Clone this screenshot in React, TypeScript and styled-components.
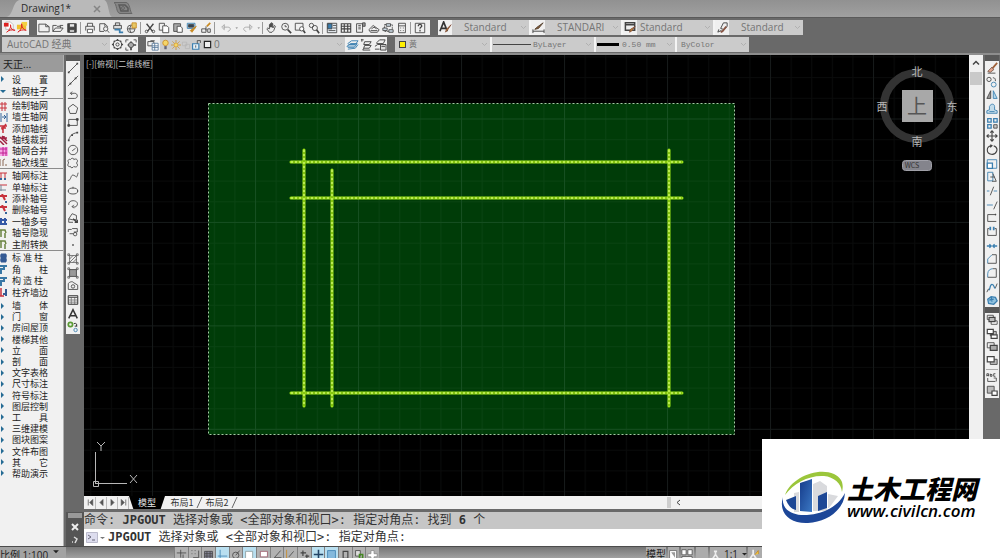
import React from 'react';
import styled, { createGlobalStyle } from 'styled-components';

const cjk = "'Noto Sans CJK SC', sans-serif";

const Global = createGlobalStyle`
  * { box-sizing: border-box; }
  body { margin: 0; background: #6a6a6a; font-family: 'Open Sans', ${cjk}; font-size: 10px; color: #333; }
  button { margin: 0; padding: 0; border: 0; background: none; font: inherit; color: inherit; }
  svg { display: block; flex: none; }
`;

const Page = styled.div`
  display: flex;
  flex-direction: column;
  height: 100vh;
  overflow: hidden;
  position: relative;
  background: #6a6a6a;
`;

/* ---------- document tabs ---------- */
const FileTabs = styled.header`
  display: flex;
  align-items: flex-end;
  height: 18px;
  padding-left: 6px;
  background: linear-gradient(#919191, #a0a0a0);
  border-bottom: 1px solid #5a5a5a;
`;
const FileTab = styled.div`
  display: flex;
  align-items: center;
  justify-content: space-between;
  position: relative;
  width: 106px;
  height: 17px;
  padding: 0 9px 0 15px;
  color: #2c2c2c;
  line-height: 17px;
`;
const TabShape = styled.svg`
  position: absolute;
  inset: 0;
  z-index: 0;
`;
const TabTitle = styled.span`
  position: relative;
`;
const TabClose = styled.button`
  position: relative;
  display: grid;
  place-items: center;
  width: 12px;
  height: 12px;
`;
const NewTab = styled.button`
  height: 17px;
`;

/* ---------- toolbars ---------- */
const Toolbars = styled.div`
  display: flex;
  flex-direction: column;
  gap: 2px;
  padding: 2px 2px 1px;
  background: #696969;
  border-bottom: 2px solid #8d8d8d;
`;
const ToolbarRow = styled.div`
  display: flex;
  gap: 8px;
  height: 15px;
`;
const Bar = styled.div<{ $w: number; $light?: boolean }>`
  display: flex;
  align-items: center;
  width: ${p => p.$w}px;
  height: 15px;
  background: ${p => (p.$light ? '#f0f0f0' : '#cbcbcb')};
`;
const IconButton = styled.button<{ $w?: number }>`
  display: grid;
  place-items: center;
  flex: none;
  width: ${p => p.$w || 14}px;
  height: 15px;
  background: #f0f0f0;
`;
const Rule = styled.span`
  flex: none;
  width: 2px;
  height: 12px;
  margin: 0 1px;
  border-left: 1px solid #999;
`;
const Combo = styled.label<{ $w: number; $divider?: boolean }>`
  display: flex;
  align-items: center;
  position: relative;
  flex: none;
  width: ${p => p.$w}px;
  height: 15px;
  padding-right: 2px;
  border-left: ${p => (p.$divider ? '2px solid #f4f4f4' : '0')};
  background: #cbcbcb;
`;
const Select = styled.select<{ $mono?: boolean; $pad?: number }>`
  flex: 1;
  min-width: 0;
  height: 15px;
  margin: 0;
  padding: 0 0 0 ${p => p.$pad || 0}px;
  border: 0;
  appearance: none;
  background: transparent;
  color: #757575;
  font-family: ${p => (p.$mono ? "'Liberation Mono', " : "'Open Sans', ")} ${cjk};
  font-size: ${p => (p.$mono ? 8 : 10)}px;
  line-height: 15px;
  text-overflow: clip;
`;
const Swatch = styled.span`
  width: 7px;
  height: 7px;
  margin: 0 0 0 4px;
  background: #ffef00;
  border: 1px solid #444;
`;
const LineSample = styled.span<{ $w: number; $h: number }>`
  flex: none;
  width: ${p => p.$w}px;
  height: ${p => p.$h}px;
  margin-left: 1px;
  background: ${p => (p.$h > 1 ? '#000' : '#444')};
`;

/* ---------- workspace ---------- */
const Workspace = styled.div`
  display: flex;
  flex: 1;
  min-height: 0;
`;
const SidePanel = styled.nav`
  display: flex;
  flex-direction: column;
  flex: none;
  width: 64px;
  background: #f1f1f1;
  border-right: 1px solid #b0b0b0;
  overflow: hidden;
  font-family: ${cjk};
`;
const PanelTitle = styled.h1`
  margin: 0;
  height: 17px;
  padding-left: 3px;
  background: #9b9b9b;
  font-size: 10px;
  font-weight: 400;
  line-height: 17px;
  color: #222;
`;
const MenuGroup = styled.div<{ $h: number; $line?: boolean }>`
  display: flex;
  flex: none;
  flex-direction: column;
  height: ${p => p.$h}px;
  padding-top: 1px;
  border-bottom: 1px solid ${p => (p.$line ? '#8c8c8c' : 'transparent')};
`;
const MenuItem = styled.button`
  display: flex;
  flex: 1;
  align-items: center;
  gap: 4px;
  min-height: 0;
  color: #222;
  font-size: 9px;
  line-height: 11px;
  text-align: left;
  white-space: pre;
`;
const MainColumn = styled.main`
  display: flex;
  flex: 1;
  flex-direction: column;
  min-width: 0;
`;
const DrawingRow = styled.div`
  display: flex;
  flex: 1;
  min-height: 0;
`;
const Dock = styled.aside<{ $w: number }>`
  display: flex;
  flex-direction: column;
  flex: none;
  width: ${p => p.$w}px;
  padding: 0 0 0 2px;
  background: #696969;
`;
const Grip = styled.div`
  width: 14px;
  height: 6px;
  background: #585858;
`;
const ToolColumn = styled.div<{ $h: number }>`
  display: flex;
  flex: none;
  flex-direction: column;
  width: 14px;
  height: ${p => p.$h}px;
  background: #f0f0f0;
`;
const ToolButton = styled.button`
  display: grid;
  place-items: center;
  flex: 1;
  min-height: 0;
  width: 14px;
`;
const ColumnRule = styled.hr`
  width: 12px;
  margin: 1px;
  border: 0;
  border-top: 1px solid #aaa;
`;
const CanvasColumn = styled.div`
  display: flex;
  flex: 1;
  flex-direction: column;
  min-width: 0;
`;
const Viewport = styled.section`
  position: relative;
  flex: 1;
  min-height: 0;
  overflow: hidden;
  background: #000;
`;
const ViewLabel = styled.p`
  position: absolute;
  top: 3px;
  left: 2px;
  margin: 0;
  color: #c8c8c8;
  font-family: ${cjk};
  font-size: 8px;
  line-height: 11px;
`;
const Compass = styled.svg`
  position: absolute;
  top: 6px;
  right: 11px;
`;
const Ucs = styled.svg`
  position: absolute;
  bottom: 4px;
  left: 4px;
`;
const VScroll = styled.div`
  display: flex;
  flex-direction: column;
  align-items: center;
  gap: 4px;
  flex: none;
  width: 14px;
  padding-top: 3px;
  background: #f0f0f0;
`;
const Thumb = styled.div`
  width: 12px;
  height: 13px;
  background: #c9c9c9;
`;
const LayoutTabs = styled.div`
  display: flex;
  flex: none;
  align-items: center;
  height: 13px;
  padding-left: 1px;
  background: #f1f1f1;
  font-family: ${cjk};
  font-size: 9px;
  line-height: 13px;
`;
const NavButton = styled.button`
  display: grid;
  place-items: center;
  width: 11px;
  height: 12px;
  border-right: 1px solid #bbb;
`;
const LayoutTab = styled.button<{ $active?: boolean }>`
  width: ${p => (p.$active ? 36 : 34)}px;
  height: 13px;
  color: ${p => (p.$active ? '#e8e8e8' : '#333')};
  background: ${p => (p.$active ? '#000' : 'none')};
  clip-path: ${p => (p.$active ? 'polygon(0 0, 100% 0, 88% 100%, 12% 100%)' : 'none')};
`;
const HScroll = styled.div`
  display: flex;
  align-items: center;
  gap: 5px;
  flex: none;
  width: 302px;
  height: 13px;
  margin-left: auto;
`;
const HGrip = styled.span`
  width: 4px;
  height: 11px;
  background: #cdcdcd;
`;

/* ---------- command line ---------- */
const Command = styled.section`
  display: flex;
  flex: none;
  padding: 3px 0 0 2px;
  background: #696969;
`;
const CommandGrip = styled.div`
  display: flex;
  flex-direction: column;
  align-items: center;
  gap: 5px;
  width: 18px;
  height: 34px;
  background: #555;
`;
const GripDots = styled.div`
  width: 14px;
  height: 5px;
  margin-top: 1px;
  background: radial-gradient(circle, #999 1px, transparent 1px) 0 0 / 2px 2px;
`;
const Console = styled.div`
  flex: 1;
  min-width: 0;
  color: #333;
  font-family: 'DejaVu Sans Mono', ${cjk};
  font-size: 12px;
  line-height: 17px;
  white-space: pre;
`;
const History = styled.p`
  height: 17px;
  margin: 0;
  background: #c6c6c6;
`;
const Prompt = styled.label`
  display: flex;
  align-items: center;
  height: 17px;
  padding-left: 2px;
  background: #fff;
`;
const PromptText = styled.span`
  padding-left: 3px;
`;
const PromptInput = styled.input`
  flex: 1;
  min-width: 0;
  height: 17px;
  padding: 0;
  border: 0;
  background: transparent;
  font: inherit;
  outline: 0;
`;

/* ---------- status bar ---------- */
const StatusBar = styled.footer`
  display: flex;
  flex: none;
  height: 12px;
  border-top: 1px solid #4c4c4c;
  overflow: hidden;
  background: linear-gradient(#767676, #a0a0a0);
  font-family: 'Open Sans', ${cjk};
`;
const Scale = styled.button`
  display: flex;
  align-items: flex-start;
  gap: 4px;
  width: 66px;
  height: 16px;
  padding-top: 1px;
  background: #a3a3a3;
  color: #1e1e1e;
  line-height: 14px;
`;
const StatusIcons = styled.div`
  display: flex;
  width: 205px;
  margin-left: 108px;
`;
const StatusButton = styled.button<{ $on?: boolean }>`
  display: grid;
  place-items: center;
  flex: 1;
  height: 14px;
  background: ${p => (p.$on ? '#b9dff0' : '#b2b2b2')};
  border-left: 1px solid #808080;
`;
const StatusRight = styled.div`
  display: flex;
  gap: 2px;
  width: 354px;
  margin-left: auto;
  line-height: 14px;
  color: #1e1e1e;
`;
const StatusText = styled.button<{ $w: number }>`
  display: flex;
  align-items: center;
  gap: 3px;
  width: ${p => p.$w}px;
  height: 14px;
  background: #acacac;
`;

/* ---------- site badge ---------- */
const Badge = styled.a`
  position: absolute;
  right: 0;
  bottom: 0;
  display: flex;
  align-items: center;
  gap: 0;
  width: 238px;
  height: 119px;
  padding: 0 0 2px 19px;
  background: #fff;
  color: #000;
  text-decoration: none;
`;
const BadgeText = styled.span`
  display: flex;
  flex-direction: column;
  font-style: italic;
  white-space: nowrap;
`;
const BadgeName = styled.strong`
  font-family: ${cjk};
  font-size: 26px;
  font-weight: 900;
  line-height: 26px;
`;
const BadgeUrl = styled.span`
  font-family: 'Open Sans', sans-serif;
  font-size: 17px;
  font-weight: 600;
  line-height: 20px;
`;

/* ---------- icons, all on a 14 unit square ---------- */
const D = '#444';
const B = '#3b7fb0';
const O = '#c98a22';
const glyphs: Record<string, React.ReactNode> = {
  pdf: <><path d="M3 1h5l3 3v5H3z" fill="#fff" stroke="#bbb" /><path d="M1 2h5v4H1z" fill="#d22" stroke="none" /><path d="M4 12c3-2 5-6 4-8 0 4 2 6 5 6-4-1-7 0-9 2z" stroke="#d22" /></>,
  pdfy: <><path d="M1 4h10v5H1z" fill="#f0c030" stroke="none" /><path d="M6 1h6v4H6z" fill="#f3d040" stroke="none" /><path d="M2 12c3-2 5-6 4-9 0 4 2 6 5 7-4-1-7 0-9 2z" stroke="#d22" /></>,
  fresh: <path d="M1 2.5h8l4 3v6H1zM9 2.5v3h4" />,
  open: <path d="M1 11V4h4l1 1h4v2M1 11l3-4h9l-3 4zM9 4h4" />,
  save: <><path d="M2 2h10v10H2z" fill={D} /><path d="M4 2h6v4H4z" fill="#e8e8e8" /><path d="M4 9h6v3H4z" fill="#ddd" /></>,
  print: <><path d="M4 5V1.5h6V5M2 10V5h10v5" /><path d="M4 8.5h6v4H4z" fill="#fff" /></>,
  preview: <><path d="M7 11H2V2h6l3 3v1M8 2v3" /><circle cx="9" cy="8" r="2.5" /><path d="M11 10l2 2.500" /></>,
  publish: <><path d="M2 8V4h9v4zM4 4V1h5v3" fill="#ddd" /><path d="M3 9h6v3h4" stroke={B} strokeWidth="2" /></>,
  globe: <><circle cx="6" cy="8" r="4.500" /><path d="M2 8h8M6 4c-2 3-2 6 0 8" /><path d="M7 1h5v6H7z" fill="#e6c867" stroke={O} /></>,
  cut: <><path d="M3 2l7 9M11 2L4 11" strokeWidth="1.600" /><circle cx="3" cy="11" r="1.500" /><circle cx="11" cy="11" r="1.500" /></>,
  copy: <><path d="M1.500 1.500h6v8h-6z" /><path d="M5.500 4.500h5l2 2v6h-7z" fill="#fff" /></>,
  paste: <><path d="M2 2h8v9H2z" fill="#aaa" /><path d="M6 5h4l2 2v5H6z" fill="#fff" /></>,
  match: <><path d="M1.500 1.500h9v6h-9z" fill="#cfe2f0" stroke={B} /><path d="M3 3h6v3H3z" fill="#345" /><path d="M12 5l-5 7-2-2z" fill={O} stroke={O} /></>,
  blockedit: <><path d="M2 8h5v4H2zM9 8h3v4H9zM7 5v5" /><path d="M8 5l4-4" stroke={O} strokeWidth="2" /></>,
  undo: <path d="M2 6l3-3v6zM4 6h5c4 0 4 4 0 5" stroke="#a4a4a4" fill="none" />,
  redo: <path d="M12 6L9 3v6zM10 6H5c-4 0-4 4 0 5" stroke="#a4a4a4" fill="none" />,
  dot: <path d="M1 6h6L4 9z" fill="#777" stroke="none" />,
  pan: <path d="M4 12L1 8l1-1 2 1V3h1v3-4h1v4-5h1v5-4h1v5l2-3 1 1-2 5-2 2z" fill="#eee" />,
  zoomrt: <><circle cx="6" cy="5.500" r="4" /><path d="M9 9l4 4" strokeWidth="2" /><path d="M6 3.500v2h2" /></>,
  zoomwin: <><path d="M1.500 1.500h9v8h-9z" /><circle cx="9" cy="8" r="2.500" fill="#fff" /><path d="M11 10l2 3" strokeWidth="2" /></>,
  zoomprev: <><circle cx="4" cy="4" r="2.500" /><circle cx="8" cy="7" r="3" /><path d="M10 9l3 4" strokeWidth="2" /></>,
  props: <><path d="M1.500 1.500h11v11h-11z" fill="#e8eef3" /><path d="M2 2h5v6H2z" fill={B} /><path d="M8 4h4M8 7h4M3 10h8" /></>,
  center: <path d="M1.500 2h11v10h-11zM5 2v10M9 2v10M1.500 5h11M1.500 8h11" strokeWidth="1.300" />,
  palettes: <><path d="M3 2h7v10H3zM5 4h3M5 6h3M5 8h3" /><path d="M10 1h3v4h-3z" fill="#999" /></>,
  sheets: <path d="M1 9l5-5 7 5-2 3H3zM4 8l3-2 3 2M3 10h8" />,
  markup: <><path d="M3 3h9v8H3z" strokeDasharray="2 1" /><path d="M5 2h5v3H5zM1 7h5v3H1zM8 9h5v3H8z" fill="#ccdbe5" /></>,
  calc: <><path d="M3 1.500h8v11H3zM3 4.500h8M5 7h1M8 7h1M5 10h1M8 10h1" /></>,
  help: <><path d="M1.500 1.500h11v11h-11z" /><path d="M5 5c0-3 4-3 4 0 0 1-2 1-2 3M7 9v2" strokeWidth="1.500" /></>,
  textstyle: <><path d="M1 11L5 1l4 10M3 8h5" strokeWidth="1.800" stroke="#333" /><path d="M13 4l-4 6-2 2 1-3z" fill={O} stroke="#854" /></>,
  dimstyle: <><path d="M1 11h12M1 9v4M13 9v4" /><path d="M12 2L7 8 3 9l2-2z" fill="#8a5a35" stroke="#543" /></>,
  tablestyle: <><path d="M1.500 2h10v8h-10zM1.500 4h10" strokeWidth="1.600" /><path d="M12 6l-4 5-2 1 1-3z" fill={O} stroke="#854" /></>,
  leaderstyle: <><path d="M3 9L2 12l4-2M5 8L8 2h4v4L8 9z" /><path d="M11 6l-4 5-2 1" stroke="#854" strokeWidth="2" /></>,
  gear: <><circle cx="7" cy="7" r="4.500" /><circle cx="7" cy="7" r="1.700" /><path d="M7 1v2M7 11v2M1 7h2M11 7h2M3 3l1 1M10 10l1 1M11 3l-1 1M4 10l-1 1" strokeWidth="1.600" /></>,
  gear2: <><path d="M1 1h3M1 1v3M13 1h-3M13 1v3M1 13h3M1 13v-3" /><circle cx="7" cy="7" r="3" fill="#aaa" /><path d="M7 3v1M7 10v3M3 7h1M10 7h3" strokeWidth="2" /></>,
  layers: <><path d="M1 8V3h7v5zM4 2h5" stroke={D} /><path d="M6 5h7v8H6zM6 8h7M6 10h7M9 5v8" fill="#fff" stroke="#579" /></>,
  bulb: <><circle cx="7" cy="5" r="3.500" fill="#f5d668" stroke={O} /><path d="M5.500 9h3v4h-3z" fill="#667" stroke="none" /></>,
  sun: <><circle cx="7" cy="7" r="3" fill="#f5d668" stroke={O} /><path d="M7 0v3M7 11v3M0 7h3M11 7h3M2 2l2 2M10 10l2 2M12 2l-2 2M4 10l-2 2" stroke={O} /></>,
  plotoff: <path d="M2 3h6v5H2zM6 6h6v6H6z" stroke="#b5b5b5" />,
  lock: <><path d="M2 6h8v7H2z" fill="#e5f1f8" stroke={B} strokeWidth="1.500" /><path d="M8 6V2h4v3M6 8v3" /></>,
  square: <path d="M3 3h8v8H3z" fill="#eee" strokeWidth="1.500" stroke="#222" />,
  lay1: <><path d="M1 9l4-3h7l-3 4H2z" fill="#a9c7dc" stroke={B} /><path d="M2 6l4-3h7l-3 4H3zM2 12l8-1 3-4" stroke={B} fill="none" /></>,
  lay2: <path d="M1 2h3M2 1v3M5 4h7l-2 3H4zM5 8h7l-2 3H4zM4 11l-1 2h8" />,
  lay3: <><path d="M3 5l3-3h6l-2 4H3zM1 9l3-2h4M1 12h5" /><path d="M7 7h6v6H7zM8 9h4" fill="#ddd" /></>,
  line: <><path d="M2 12L12 2" /><path d="M1 12h2M11 2h2" strokeWidth="2" /></>,
  xline: <><path d="M1 13L13 1" /><path d="M3 9h2v2H3zM9 3h2v2H9z" fill={D} stroke="none" /></>,
  pline: <path d="M1 11h8c4 0 4-6 0-6H4M6 3L4 5l2 2" />,
  polygon: <path d="M7 1.500l5.500 4.200-2 6.500h-7l-2-6.500z" />,
  rect: <><path d="M2 4h10v7H2z" /><path d="M1 10h2v2H1zM11 3h2v2h-2z" fill={D} /></>,
  arc: <><path d="M2 12c1-5 4-8 10-9" /><path d="M1 11h2v2H1zM5 5h2v2H5zM11 2h2v2h-2z" fill={D} stroke="none" /></>,
  circle: <><circle cx="7" cy="7" r="5.500" /><path d="M6 8l4-3" /></>,
  cloud: <path d="M4 3c1-2 4-2 4 0 3-2 6 1 3 4 3 3 0 6-3 4-1 2-4 2-4 0-3 1-4-2-2-4-2-3 0-5 2-4z" />,
  spline: <path d="M1 11C5 12 4 3 8 5s3 4 5-3" />,
  ellipse: <><ellipse cx="7" cy="7" rx="5.500" ry="3.500" /><path d="M6.500 3h1M1 7h1M12 7h1" strokeWidth="2" /></>,
  elarc: <path d="M2 8c-1-7 12-6 10 0-1 3-4 3-6 2M8 8l-2 2 2 2" />,
  insert: <><path d="M2 8l4-6 5 2v5H6zM2 8v4h5" /><path d="M7 8l5 4M12 9v3H9" strokeWidth="1.600" /></>,
  block: <><path d="M1.500 7V4h4M6 3h6v4H8M3 9h4" /><circle cx="9.500" cy="9.500" r="2" /></>,
  point: <path d="M6.500 6.500h1v1h-1z" />,
  hatch: <path d="M3 3h8v8H3zM1 1h2v2H1zM11 1h2v2h-2zM1 11h2v2H1zM11 11h2v2h-2zM3 7l4-4M3 11l8-8M7 11l4-4" strokeWidth=".8" />,
  gradient: <><path d="M3 3h8v8H3z" fill="#999" /><path d="M1 1h2v2H1zM11 1h2v2h-2zM1 11h2v2H1zM11 11h2v2h-2z" strokeWidth=".8" /></>,
  region: <><path d="M1.500 11V4c3-3 6-2 6-1l5 3v5z" /><circle cx="7" cy="7.500" r="2" /></>,
  table: <><path d="M1.500 2h11v10h-11zM5 4v8M9 4v8M1.500 7h11M1.500 9.500h11" stroke="#777" /><path d="M1.500 2h11v10h-11zM1.500 4h11" /></>,
  mtext: <path d="M2 12L7 2l5 10M4 9h6" strokeWidth="1.800" stroke="#333" />,
  addsel: <><circle cx="4" cy="4" r="2.500" stroke="#5a9a35" strokeWidth="2" /><path d="M8 3c3-1 4 1 3 3M9 6h3" stroke="#222" /><circle cx="10" cy="10.500" r="2" stroke={B} /></>,
  erase: <><path d="M13 1L7 8" strokeWidth="2" stroke="#a06038" /><path d="M7 6l2 3-4 3-3-1z" fill="#e3a38c" stroke="#754" /><path d="M2 13h9" /></>,
  copyobj: <><circle cx="3.500" cy="4" r="2.500" /><circle cx="9" cy="10" r="2.800" stroke={B} /><path d="M8 2c3 0 3 2 3 4" /></>,
  mirror: <><path d="M5.500 2v9H1z" fill="#999" /><path d="M8.500 2v9H13z" stroke={B} fill="#b5d7ea" /></>,
  offset: <path d="M1 12v-3l3-1V4c2-4 6-3 6 0v4l3 1v3zM4 10h6" stroke={B} fill="#c3dcea" />,
  array: <><path d="M2 2h4v4H2zM9 2h4v4H9zM2 9h4v4H2z" stroke={B} strokeWidth="1.500" /><path d="M9 9h4v4H9z" fill="#ccc" /></>,
  move: <path d="M7 1v12M1 7h12M5 3l2-2 2 2M5 11l2 2 2-2M3 5L1 7l2 2M11 5l2 2-2 2" strokeWidth="1.300" />,
  rotate: <path d="M9 2c7 3 3 11-3 10C0 11 0 3 6 2M5 1l2 1-2 2" strokeWidth="1.300" />,
  scale: <><path d="M1.500 2h11v10h-11z" stroke={B} /><path d="M1.500 6h6v6h-6z" fill="#fff" stroke={B} strokeWidth="1.500" /></>,
  stretch: <><path d="M2 1.500h6v10H2z" stroke={B} /><path d="M8 3l4 9H7M5 7h5" /></>,
  trim: <><path d="M1 7h3M9 7h4" stroke={B} /><path d="M5 12L9 2" /></>,
  extend: <><path d="M1 7h7" stroke={B} /><path d="M9 12l4-9" /></>,
  break1: <path d="M12 3H2v8h10M11 2v2" />,
  break2: <><path d="M4 3H2v8h10V3h-2" /><path d="M5 1v4M9 1v4" stroke={B} strokeWidth="2" /></>,
  join: <path d="M1 7h5M8 7h5M4 5l2 2-2 2M10 5L8 7l2 2" stroke={B} strokeWidth="1.500" />,
  chamfer: <><path d="M2 12V7l5-5" stroke={B} /><path d="M7 2h5v10H2" /></>,
  fillet: <><path d="M2 12V8c0-4 3-6 6-6" stroke={B} /><path d="M8 2h4v10H2" /></>,
  blend: <><path d="M3 10C5 12 4 4 7 4s2 5 4 4" stroke={B} strokeWidth="1.500" /><path d="M11 8l2-5M1 13l2-4" /></>,
  explode: <path d="M2 6l4-3 5 1 2 4-4 4-6-1zM4 7l5-1M6 3l1 6" fill="#91c2df" stroke={B} strokeWidth="1.500" />,
  front: <><path d="M1.500 1.500h7v5h-7zM6 8h7v4H6z" fill="#fff" /><path d="M3.500 4h7v5h-7z" fill="#bbb" strokeWidth="1.400" /></>,
  back: <><path d="M5 4h7v5H5z" fill="#bbb" /><path d="M1.500 1.500h7v5h-7zM6 8h7v4H6z" fill="#fff" strokeWidth="1.400" /></>,
  above: <><path d="M1.500 2h8v6h-8z" /><path d="M5 5h8v6H5z" fill="#aaa" strokeWidth="1.400" /></>,
  under: <><path d="M5 5h8v6H5z" fill="#bbb" /><path d="M1.500 2h8v6h-8z" fill="#fff" strokeWidth="1.400" /></>,
  anno: <><path d="M1 5V2h2v3M1 4h2M5 2v3h2V3H5M11 2H9v3h2" /><path d="M2 7v4h9M9 7h3v4" /></>,
  hatchback: <><path d="M1.500 1.500h8v8h-8z" fill="#bbb" /><path d="M7 7h6v5H7z" fill="#fff" strokeWidth="1.400" /></>,
  s0: <path d="M1 5h12M6 1v10M9 7v5" />, s1: <path d="M11 2v9H4M2 2h1M6 2h1M2 6h1M6 6h1" />,
  s2: <path d="M2 3h10v9H2zM2 6h10M2 9h10M5 3v9M9 3v9" fill="#889" />, s3: <path d="M1 9h12M4 1v12" stroke={B} />,
  s4: <><circle cx="6" cy="8" r="4" /><path d="M6 8l5-6" /></>, s5: <path d="M2 3h9v10H2z" fill="#fff" stroke="#899" />,
  s6: <path d="M3 3h9v7H3z" fill="#fff" stroke="#956" />, s7: <path d="M11 2L3 11h9" />,
  s8: <><path d="M2 1v11h10" stroke={O} /><path d="M5 10l6-7" /></>, s9: <path d="M2 5h7M5 2v7M8 9h5M10 7v5" strokeWidth="1.500" />,
  s10: <path d="M1 7h12M7 1v12" strokeWidth="2" stroke="#246" />, s11: <path d="M2 2h10v11H2z" fill="#84b9dc" stroke={B} />,
  s12: <path d="M4 3h6v9H4z" strokeWidth="1.500" />, s13: <><path d="M2 2h6v7H2z" fill="#ddd" /><path d="M7 7h4v5H7z" stroke="#482" strokeWidth="2" /></>,
  s14: <path d="M5 2h4v4h4v4H9v4H5v-4H1V6h4z" fill="#fff" stroke="#888" />,
  page: <><path d="M2 2h9v11H2z" fill="#fff" stroke="#666" /><path d="M4 4l5 7V4z" fill="#999" stroke="none" /></>,
  tiles: <path d="M1 2h5v6H1zM8 2h5v6H8zM1 10h12v3H1z" fill="#fff" stroke="#555" />,
  person: <path d="M7 2v5l-4 6M7 7l4 6M5 3h4" strokeWidth="2" stroke="#eee" />,
  personsun: <><path d="M6 2v5l-4 6M6 7l4 6" strokeWidth="2" stroke="#eee" /><path d="M8 8l4-5v4" stroke={O} fill="#f6d24a" /></>,
  down: <path d="M2 4h10L7 9z" fill="#222" stroke="none" />,
};

const Icon = ({ n, s = 13 }: { n: string; s?: number }) => (
  <svg width={s} height={s} viewBox="0 0 14 14" fill="none" stroke={D} aria-hidden="true">{glyphs[n]}</svg>
);
const Chevron = () => (
  <svg width="7" height="5" viewBox="0 0 7 5" fill="none" stroke="#b0b0b0" aria-hidden="true"><path d="M1 1l2.500 2.500L6 1" /></svg>
);

const standardTools: string[] = [
  'fresh', 'open', 'save', '|', 'print', 'preview', 'publish', 'globe', '|', 'cut', 'copy', 'paste', 'match', 'blockedit', '|',
  'undo', 'dot', 'redo', 'dot', '|', 'pan', 'zoomrt', 'zoomwin', 'zoomprev', '|', 'props', 'center', 'palettes', 'sheets', 'markup', 'calc', '|', 'help',
];
const drawTools = ['line', 'xline', 'pline', 'polygon', 'rect', 'arc', 'circle', 'cloud', 'spline', 'ellipse', 'elarc', 'insert', 'block', 'point', 'hatch', 'gradient', 'region', 'table', 'mtext', 'addsel'];
const modifyTools = ['erase', 'copyobj', 'mirror', 'offset', 'array', 'move', 'rotate', 'scale', 'stretch', 'trim', 'extend', 'break1', 'break2', 'join', 'chamfer', 'fillet', 'blend', 'explode'];
const widths: Record<string, number> = { undo: 18, redo: 18, dot: 4 };

const R = '#c8323c';
const menuGlyphs: Record<string, React.ReactNode> = {
  closed: <path d="M1 2l3 3-3 3z" fill="#246b94" />,
  opened: <path d="M0 3h6L3 6z" fill="#246b94" />,
  grid: <path d="M0 3h7M0 7h7M2 1v9M5 1v9" stroke={R} />,
  wall: <path d="M1 1v9M7 1v9M2 5h4M4 3l2 2-2 2" stroke="#35659a" />,
  add: <path d="M0 3h7M1 5h5M2 7l4-6M3 3v7" stroke={R} strokeWidth="1.500" />,
  trim: <path d="M0 2l7 7M2 1l5 5M0 6l4 4M4 1v3M0 3h7" stroke="#a02040" strokeWidth="1.500" />,
  merge: <><path d="M0 1h8v9H0z" fill="#f5a5e5" /><path d="M0 3h7M0 7h7M3 1v9M6 1v9" stroke="#c02090" /></>,
  change: <path d="M0 2v7M3 9V3l2-1M5 8h2" stroke="#865" />,
  mark: <><path d="M0 2h7M1 2v5M5 2v5" stroke={R} /><path d="M0 8h2M4 8h2" stroke="#35659a" strokeWidth="2" /></>,
  single: <><path d="M0 3h7" stroke={R} /><path d="M0 8h6M1 3v6" stroke="#789" /></>,
  num: <><path d="M0 2h7M2 0l3 6" stroke={R} strokeWidth="2" /><path d="M5 8h2" stroke="#35659a" strokeWidth="2" /></>,
  multi: <path d="M1 2v7M5 2v7M0 4h7M0 8h7" stroke="#3458a5" strokeWidth="2" />,
  hide: <path d="M0 2h5l1 3M1 2v7M5 5v5" stroke="#6a8340" strokeWidth="1.500" />,
  column: <path d="M1 1h5v8H1zM0 3h7M0 7h7" fill="#345b94" stroke="#345b94" />,
  corner: <path d="M0 2h7M0 5h4V2M1 5v5" stroke="#3a78a5" strokeWidth="2" />,
  align: <><path d="M1 1v8M0 9h4" stroke={R} strokeWidth="1.500" /><path d="M6 2v7M3 7h4" stroke="#345b94" strokeWidth="2" /></>,
};
const groups: { h: number; line?: boolean; items: [string, string][] }[] = [
  { h: 27, line: true, items: [['closed', '设　　置'], ['opened', '轴网柱子']] },
  { h: 70, line: true, items: [['grid', '绘制轴网'], ['wall', '墙生轴网'], ['add', '添加轴线'], ['trim', '轴线裁剪'], ['merge', '轴网合并'], ['change', '轴改线型']] },
  { h: 82, line: true, items: [['mark', '轴网标注'], ['single', '单轴标注'], ['num', '添补轴号'], ['num', '删除轴号'], ['multi', '一轴多号'], ['hide', '轴号隐现'], ['hide', '主附转换']] },
  { h: 48, items: [['column', '标 准 柱'], ['corner', '角　　柱'], ['corner', '构 造 柱'], ['align', '柱齐墙边']] },
  { h: 181, items: ['墙　　体', '门　　窗', '房间屋顶', '楼梯其他', '立　　面', '剖　　面', '文字表格', '尺寸标注', '符号标注', '图层控制', '工　　具', '三维建模', '图块图案', '文件布图', '其　　它', '帮助演示'].map(t => ['closed', t] as [string, string]) },
];

/* axis lines of the drawing: x1, y1, x2, y2 */
const axes = [
  [207, 107, 598, 107], [207, 143, 598, 143], [207, 338, 598, 338],
  [220, 95, 220, 351], [248, 115, 248, 351], [585, 95, 585, 351],
];

const Drawing = () => (
  <svg width="100%" height="100%" aria-label="轴网">
    <defs>
      <pattern id="minor" x="68" y="63.500" width="20.600" height="20.700" patternUnits="userSpaceOnUse">
        <path d="M.5 0v21M0 .5h21" stroke="#bfe0e0" strokeOpacity=".05" />
      </pattern>
      <pattern id="major" x="68" y="63.500" width="103" height="103.400" patternUnits="userSpaceOnUse">
        <path d="M.5 0v104M0 .5h103" stroke="#bfe0e0" strokeOpacity=".07" />
      </pattern>
    </defs>
    <rect x="124.500" y="48.500" width="526" height="331" fill="#003c08" />
    <rect width="100%" height="100%" fill="url(#minor)" />
    <rect width="100%" height="100%" fill="url(#major)" />
    <rect x="124.500" y="48.500" width="526" height="331" fill="none" stroke="#a5cba5" strokeDasharray="2 2" />
    {axes.map(([x1, y1, x2, y2], i) => (
      <g key={i}>
        <line x1={x1} y1={y1} x2={x2} y2={y2} stroke="#9be319" strokeWidth="3" strokeLinecap="round" />
        <line x1={x1} y1={y1} x2={x2} y2={y2} stroke="#d8f58a" strokeWidth="1" strokeDasharray="2 2" />
        <line x1={x1} y1={y1} x2={x2} y2={y2} stroke="#6fa808" strokeWidth="1" strokeDasharray="2 2" strokeDashoffset="2" />
      </g>
    ))}
  </svg>
);

export default function App() {
  return (
    <Page>
      <Global />
      <FileTabs>
        <FileTab>
          <TabShape width="106" height="17" viewBox="0 0 106 17"><path d="M0 17C8 16 6 1 14 0h84c5 1 4 15 8 17z" fill="#b9b9b9" /></TabShape>
          <TabTitle>Drawing1*</TabTitle>
          <TabClose aria-label="关闭">
            <svg width="8" height="8" viewBox="0 0 8 8" stroke="#858585" strokeWidth="1.500"><path d="M1 1l6 6M7 1L1 7" /></svg>
          </TabClose>
        </FileTab>
        <NewTab aria-label="新建">
          <svg width="21" height="17" viewBox="0 0 21 17" fill="none" stroke="#666">
            <path d="M2 2.500h12c4 0 4 10 6 11H8C4 13 5 4 2 2.500z" fill="#858585" />
            <path d="M7 5h6l3 3v3H9z" stroke="#5a5a5a" strokeWidth="1.500" /><circle cx="11" cy="8" r="1.500" />
          </svg>
        </NewTab>
      </FileTabs>

      <Toolbars>
        <ToolbarRow>
          <Bar $w={27} $light>
            <IconButton aria-label="PDF"><Icon n="pdf" /></IconButton>
            <IconButton aria-label="PDF 批注" $w={13}><Icon n="pdfy" /></IconButton>
          </Bar>
          <Bar $w={393} $light>
            {standardTools.map((n, i) => n === '|' ? <Rule key={i} /> : (
              <IconButton key={i} aria-label={n} $w={widths[n]}><Icon n={n} s={n === 'dot' ? 6 : 12} /></IconButton>
            ))}
          </Bar>
          <Bar $w={365}>
            <Combo $w={91}><IconButton as="span"><Icon n="textstyle" /></IconButton>
              <Select $pad={12} aria-label="文字样式"><option>Standard</option></Select><Chevron /></Combo>
            <Combo $w={92} $divider><IconButton as="span"><Icon n="dimstyle" /></IconButton>
              <Select $pad={12} aria-label="标注样式"><option>STANDARI</option></Select><Chevron /></Combo>
            <Combo $w={92} $divider><IconButton as="span"><Icon n="tablestyle" /></IconButton>
              <Select $pad={3} aria-label="表格样式"><option>Standard</option></Select><Chevron /></Combo>
            <Combo $w={90} $divider><IconButton as="span"><Icon n="leaderstyle" /></IconButton>
              <Select $pad={12} aria-label="引线样式"><option>Standard</option></Select><Chevron /></Combo>
          </Bar>
        </ToolbarRow>
        <ToolbarRow>
          <Bar $w={136}>
            <Combo $w={108}><Select $pad={5} aria-label="工作空间"><option>AutoCAD 经典</option></Select><Chevron /></Combo>
            <IconButton aria-label="设置"><Icon n="gear" /></IconButton>
            <IconButton aria-label="工作空间设置"><Icon n="gear2" s={12} /></IconButton>
          </Bar>
          <Bar $w={241}>
            <IconButton aria-label="图层特性"><Icon n="layers" s={12} /></IconButton>
            <Combo $w={185}>
              <Icon n="bulb" s={11} /><Icon n="sun" s={10} /><Icon n="plotoff" s={10} /><Icon n="lock" s={11} /><Icon n="square" s={11} />
              <Select $pad={1} aria-label="图层"><option>0</option></Select><Chevron />
            </Combo>
            <IconButton aria-label="置为当前"><Icon n="lay1" /></IconButton>
            <IconButton aria-label="上一个图层"><Icon n="lay2" /></IconButton>
            <IconButton aria-label="图层状态"><Icon n="lay3" /></IconButton>
          </Bar>
          <Bar $w={354}>
            <Combo $w={95}><Swatch /><Select $mono $pad={3} aria-label="颜色"><option>黄</option></Select><Chevron /></Combo>
            <Combo $w={104} $divider><LineSample $w={38} $h={1} /><Select $mono $pad={2} aria-label="线型"><option>ByLayer</option></Select><Chevron /></Combo>
            <Combo $w={81} $divider><LineSample $w={22} $h={3} /><Select $mono $pad={3} aria-label="线宽"><option>0.50 mm</option></Select><Chevron /></Combo>
            <Combo $w={74} $divider><Select $mono $pad={4} aria-label="打印样式"><option>ByColor</option></Select><Chevron /></Combo>
          </Bar>
        </ToolbarRow>
      </Toolbars>

      <Workspace>
        <SidePanel>
          <PanelTitle>天正...</PanelTitle>
          {groups.map((g, i) => (
            <MenuGroup key={i} $h={g.h} $line={g.line}>
              {g.items.map(([icon, text]) => (
                <MenuItem key={text}>
                  <svg width="8" height="10" viewBox="0 0 8 10" fill="none" aria-hidden="true">{menuGlyphs[icon]}</svg>
                  {text}
                </MenuItem>
              ))}
            </MenuGroup>
          ))}
        </SidePanel>

        <MainColumn>
          <DrawingRow>
            <Dock $w={20}>
              <Grip />
              <ToolColumn $h={273}>
                {drawTools.map(n => <ToolButton key={n} aria-label={n}><Icon n={n} s={12} /></ToolButton>)}
              </ToolColumn>
            </Dock>
            <CanvasColumn>
              <Viewport>
                <Drawing />
                <ViewLabel>[-][俯视][二维线框]</ViewLabel>
                <Compass width="82" height="112" viewBox="0 0 82 112" fontFamily={cjk} textAnchor="middle">
                  <circle cx="41" cy="45" r="33" fill="none" stroke="#333" strokeWidth="8" />
                  <rect x="26" y="29" width="31" height="32" fill="#a8a8a8" />
                  <text x="41" y="53" fontSize="20" fill="#555">上</text>
                  <g fontSize="11" fill="#b8b8b8">
                    <text x="41" y="15">北</text><text x="41" y="85">南</text>
                    <text x="6" y="50">西</text><text x="76" y="50">东</text>
                  </g>
                  <rect x="26.500" y="99.500" width="29" height="10" rx="3" fill="#84848c" stroke="#a0a0a8" />
                  <text x="36" y="107" fontSize="7" fill="#333">WCS</text>
                </Compass>
                <Ucs width="52" height="52" viewBox="0 0 52 52" fill="none" stroke="#b8b8b8">
                  <path d="M5.500 41.500h5v5h-5zM7.500 12v32M8 43.500h31M9 2l4 4 4-4M13 6v5M42 35l7 8M49 35l-7 8" />
                </Ucs>
              </Viewport>
              <LayoutTabs>
                {['M3 2v8M9 2L5 6l4 4z', 'M8 2L4 6l4 4z', 'M4 2l4 4-4 4z', 'M3 2l4 4-4 4zM9 2v8'].map((d, i) => (
                  <NavButton key={i} aria-label={`布局 ${i}`}><svg width="9" height="9" viewBox="0 0 12 12" fill="#555" stroke="#555"><path d={d} /></svg></NavButton>
                ))}
                <LayoutTab $active>模型</LayoutTab>
                <LayoutTab>布局1</LayoutTab>
                <svg width="1" height="13" overflow="visible" stroke="#666"><path d="M-2 12L3 1" /></svg>
                <LayoutTab>布局2</LayoutTab>
                <svg width="1" height="13" overflow="visible" stroke="#666"><path d="M-2 12L3 1" /></svg>
                <HScroll><HGrip /><svg width="5" height="7" viewBox="0 0 5 7" fill="none" stroke="#444"><path d="M4 1L1 3.500 4 6" /></svg></HScroll>
              </LayoutTabs>
            </CanvasColumn>
            <VScroll>
              <svg width="8" height="10" viewBox="0 0 8 10" fill="none" stroke="#444" strokeWidth="1.500"><path d="M1 6.500l3-3 3 3" /></svg>
              <Thumb />
            </VScroll>
            <Dock $w={17}>
              <Grip />
              <ToolColumn $h={246}>
                {modifyTools.map(n => <ToolButton key={n} aria-label={n}><Icon n={n} s={12} /></ToolButton>)}
              </ToolColumn>
              <Grip />
              <ToolColumn $h={85}>
                {['front', 'back', 'above', 'under'].map(n => <ToolButton key={n} aria-label={n}><Icon n={n} s={12} /></ToolButton>)}
                <ColumnRule />
                {['anno', 'hatchback'].map(n => <ToolButton key={n} aria-label={n}><Icon n={n} s={12} /></ToolButton>)}
              </ToolColumn>
            </Dock>
          </DrawingRow>

          <Command>
            <CommandGrip>
              <GripDots />
              <svg width="8" height="8" viewBox="0 0 8 8" stroke="#eee" strokeWidth="2"><path d="M1 1l6 6M7 1L1 7" /></svg>
              <svg width="8" height="8" viewBox="0 0 8 8" fill="none" stroke="#ddd" strokeWidth="1.500"><path d="M3 1l3 2-2 4M1 6h1" /></svg>
            </CommandGrip>
            <Console>
              <History>命令: <b>JPGOUT</b> 选择对象或 &lt;全部对象和视口&gt;: 指定对角点: 找到 <b>6</b> 个</History>
              <Prompt>
                <svg width="19" height="11" viewBox="0 0 19 11" fill="none" stroke="#667">
                  <path d="M.5.500h11v10H.5z" fill="#dde" stroke="#bbc" /><path d="M2 3l3 2-3 2M6 8h3" /><path d="M14 5h5l-2.500 2z" fill="#777" stroke="none" />
                </svg>
                <PromptText><b>JPGOUT</b> 选择对象或 &lt;全部对象和视口&gt;: 指定对角点:</PromptText>
                <PromptInput />
              </Prompt>
            </Console>
          </Command>
        </MainColumn>
      </Workspace>

      <StatusBar>
        <Scale>比例 1:100 <Icon n="down" s={8} /></Scale>
        <StatusIcons>
          {Array.from({ length: 15 }, (_, i) => (
            <StatusButton key={i} aria-label={`状态 ${i}`} $on={[3, 5, 10, 11].includes(i)}><Icon n={`s${i}`} s={11} /></StatusButton>
          ))}
        </StatusIcons>
        <StatusRight>
          <StatusText $w={20}>模型</StatusText>
          <StatusText $w={11} aria-label="图纸"><Icon n="page" s={11} /></StatusText>
          <StatusText $w={13} aria-label="快速查看"><Icon n="tiles" s={12} /></StatusText>
          <StatusText $w={12} aria-label="锁定" />
          <StatusText $w={36}><Icon n="person" s={11} />1:1<Icon n="down" s={7} /></StatusText>
          <StatusText $w={14} aria-label="注释"><Icon n="personsun" s={12} /></StatusText>
        </StatusRight>
      </StatusBar>

      <Badge href="#civilcn">
        <svg width="66" height="54" viewBox="0 0 66 54" aria-hidden="true">
          <defs><linearGradient id="tower" x1="0" y1="0" x2="1" y2="1"><stop stopColor="#153b8a" /><stop offset="1" stopColor="#3b78c4" /></linearGradient></defs>
          <path d="M32 13l7-3 7 5v25H32zM47 23l10 2-9 12h-1zM13 22l5-1v20h-5z" fill="#d9dadd" />
          <path d="M19 12l12-4v33l-12-1z" fill="url(#tower)" />
          <path d="M5 29l10-4v14C10 38 7 34 5 29zM37 25l9-4v16l-9 3z" fill="#1d4795" />
          <path d="M4 24C10 7 36-4 53 3c8 4 10 10 8 18C60 12 53 6 43 5 28 4 13 12 4 24z" fill="#9bc63b" />
          <path d="M2 26c-2 13 10 19 24 18 18-1 32-10 38-22-1 17-18 29-37 30C9 53-3 42 2 26z" fill="#1c4698" />
        </svg>
        <BadgeText>
          <BadgeName>土木工程网</BadgeName>
          <BadgeUrl>www.civilcn.com</BadgeUrl>
        </BadgeText>
      </Badge>
    </Page>
  );
}
